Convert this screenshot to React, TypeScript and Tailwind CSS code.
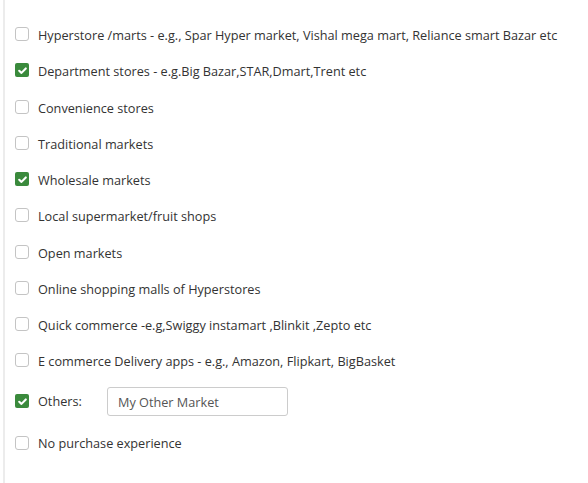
import { useState } from "react";

const options = [
  { label: "Hyperstore /marts - e.g., Spar Hyper market, Vishal mega mart, Reliance smart Bazar etc", checked: false },
  { label: "Department stores - e.g.Big Bazar,STAR,Dmart,Trent etc", checked: true },
  { label: "Convenience stores", checked: false },
  { label: "Traditional markets", checked: false },
  { label: "Wholesale markets", checked: true },
  { label: "Local supermarket/fruit shops", checked: false },
  { label: "Open markets", checked: false },
  { label: "Online shopping malls of Hyperstores", checked: false },
  { label: "Quick commerce -e.g,Swiggy instamart ,Blinkit ,Zepto etc", checked: false },
  { label: "E commerce Delivery apps - e.g., Amazon, Flipkart, BigBasket", checked: false },
];

function Box({ checked, onClick }: { checked: boolean; onClick: () => void }) {
  return (
    <span
      onClick={onClick}
      className={
        checked
          ? "flex h-[14px] w-[14px] shrink-0 items-center justify-center rounded-[2px] bg-[#3a8a3c]"
          : "h-[14px] w-[14px] shrink-0 rounded-[3px] border border-[#c4c4c4] bg-white"
      }
    >
      {checked && (
        <svg viewBox="0 0 12 12" className="h-[11px] w-[11px]">
          <path d="M2.4 6.3 L4.9 8.6 L9.6 3.8" fill="none" stroke="white" strokeWidth="2.3" strokeLinecap="round" strokeLinejoin="round" />
        </svg>
      )}
    </span>
  );
}

export default function App() {
  const [checks, setChecks] = useState(options.map((o) => o.checked));
  const [others, setOthers] = useState(true);
  const [none, setNone] = useState(false);
  const [otherText, setOtherText] = useState("My Other Market");

  const toggle = (i: number) => setChecks((c) => c.map((v, j) => (j === i ? !v : v)));

  return (
    <div className="min-h-[483px] bg-white pl-[3px] text-[12.7px] text-[#333] [font-family:'Open_Sans',sans-serif]">
      <div className="min-h-[483px] border-l-2 border-[#ececec] pl-[10px] pt-[16px]">
        {options.map((o, i) => (
          <label key={o.label} className="flex h-[36.25px] items-center gap-[9px]">
            <Box checked={checks[i]} onClick={() => toggle(i)} />
            <span className="mt-[3px] whitespace-nowrap">{o.label}</span>
          </label>
        ))}
        <div className="flex h-[46px] items-center">
          <label className="flex w-[92px] items-center gap-[9px]">
            <Box checked={others} onClick={() => setOthers(!others)} />
            <span className="mt-[1px]">Others:</span>
          </label>
          <input
            value={otherText}
            onChange={(e) => setOtherText(e.target.value)}
            className="h-[29px] w-[181px] rounded-[3px] border border-[#cccccc] px-[10px] text-[12.7px] text-[#555] outline-none"
          />
        </div>
        <label className="flex h-9 items-center gap-[9px]">
          <Box checked={none} onClick={() => setNone(!none)} />
          <span className="mt-[3px]">No purchase experience</span>
        </label>
      </div>
    </div>
  );
}
